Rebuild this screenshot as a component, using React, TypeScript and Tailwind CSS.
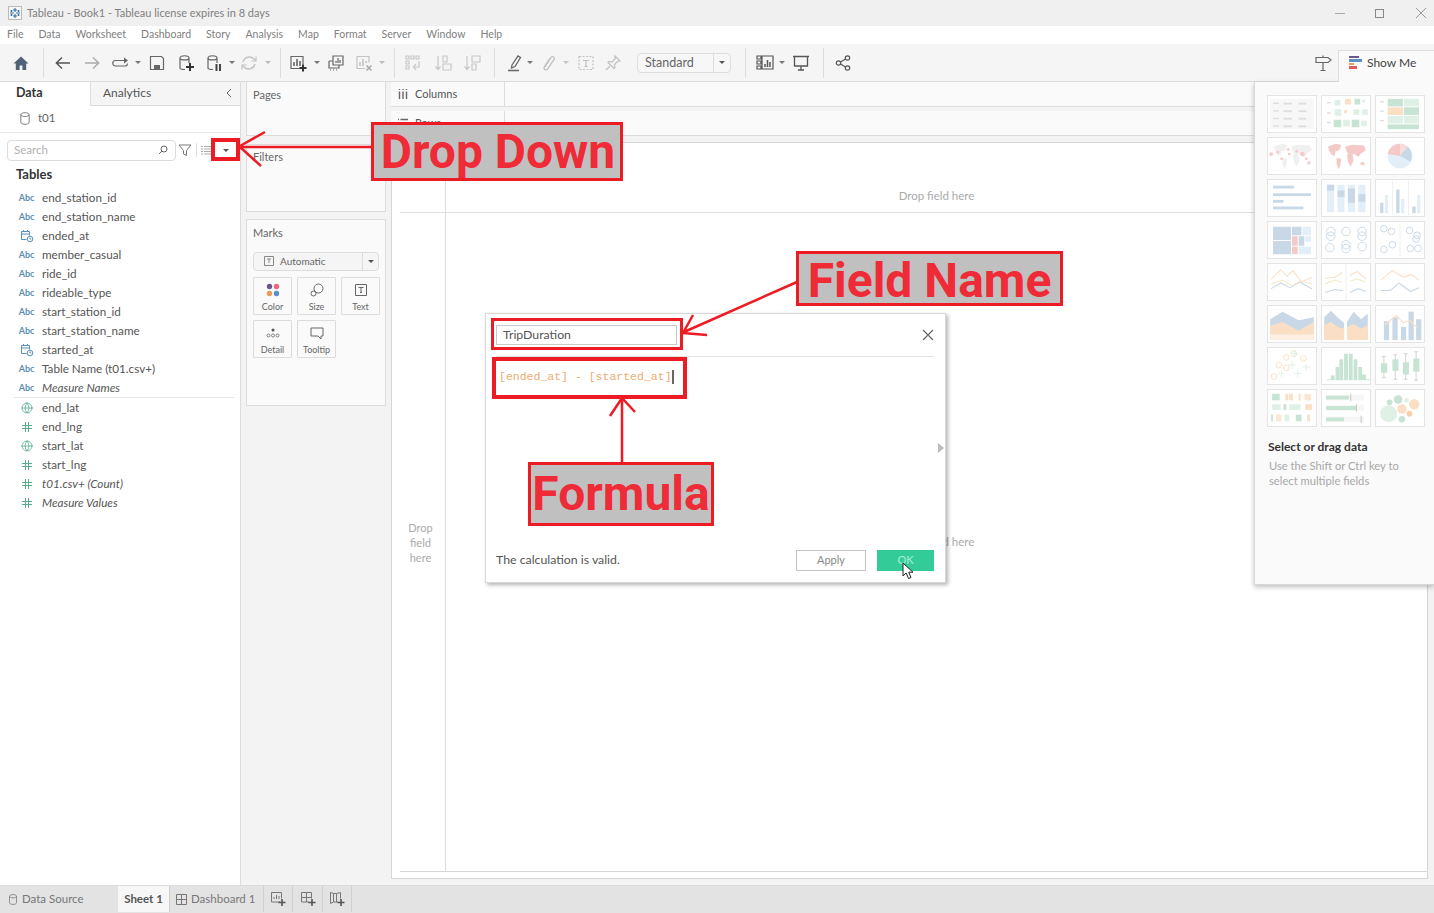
import { Globe } from "lucide-react";
import type { ReactNode } from "react";

const menus = ["File", "Data", "Worksheet", "Dashboard", "Story", "Analysis", "Map", "Format", "Server", "Window", "Help"];

const dims = [
  ["abc", "end_station_id"],
  ["abc", "end_station_name"],
  ["date", "ended_at"],
  ["abc", "member_casual"],
  ["abc", "ride_id"],
  ["abc", "rideable_type"],
  ["abc", "start_station_id"],
  ["abc", "start_station_name"],
  ["date", "started_at"],
  ["abc", "Table Name (t01.csv+)"],
  ["abc", "Measure Names", "i"],
];

const measures = [
  ["globe", "end_lat"],
  ["num", "end_lng"],
  ["globe", "start_lat"],
  ["num", "start_lng"],
  ["num", "t01.csv+ (Count)", "i"],
  ["num", "Measure Values", "i"],
];

function Ic({ children, className = "" }: { children: ReactNode; className?: string }) {
  return (
    <svg viewBox="0 0 20 20" fill="none" stroke="#666" strokeWidth="1.2" className={`h-5 w-5 shrink-0 ${className}`}>
      {children}
    </svg>
  );
}

function Caret({ className = "", color = "border-t-[#777]" }: { className?: string; color?: string }) {
  return <span className={`h-0 w-[6px] shrink-0 border-x-[3px] border-t-[3px] border-x-transparent ${color} ${className}`} />;
}

function Sep({ className = "" }: { className?: string }) {
  return <span className={`h-[30px] w-px shrink-0 bg-[#dcdcdc] ${className}`} />;
}

function Toolbar() {
  return (
    <div className="flex h-[38px] items-center border-b border-[#dcdcdc] bg-[#f5f5f5]">
      <Ic className="ml-[11px]">
        <path d="M10 3.5 2.5 10.5h2.3V17h3.8v-4.5h2.8V17h3.800v-6.500h2.300z" fill="#4f6378" stroke="none" />
      </Ic>
      <Sep className="ml-[12px]" />
      <Ic className="ml-[9px]">
        <path d="M17 10H3M9 4.5 3.3 10 9 15.500" stroke="#555" strokeWidth="1.4" />
      </Ic>
      <Ic className="ml-[9px]">
        <path d="M3 10h14M11 4.500l5.700 5.500-5.700 5.500" stroke="#aaa" strokeWidth="1.4" />
      </Ic>
      <Ic className="ml-[8px]">
        <path d="M15 7.500H5.500a2.500 2.500 0 0 0 0 5.500h10a2.500 2.500 0 0 0 2-2.500" stroke="#666" />
        <path d="M14 4.500l4 3-4 3z" fill="#666" stroke="none" />
      </Ic>
      <Caret className="ml-[5px]" />
      <Ic className="ml-[6px]">
        <path d="M3.500 3.500h11l2 2v11h-13z" stroke="#666" />
        <path d="M7 12h6v4.500H7z" fill="#666" stroke="none" />
      </Ic>
      <Ic className="ml-[9px]">
        <path d="M4 5c0-3 9-3 9 0v5M4 5c0 2.600 9 2.600 9 0M4 5v10c0 1 2 1.500 5 1.500" />
        <path d="M14 10v8M10 14h8" stroke="#333" strokeWidth="2" />
      </Ic>
      <Ic className="ml-[8px]">
        <path d="M4 5c0-3 9-3 9 0v5M4 5c0 2.600 9 2.600 9 0M4 5v10c0 1 2 1.500 5 1.500" />
        <path d="M12.500 11v7M16 11v7" stroke="#444" strokeWidth="2" />
      </Ic>
      <Caret className="ml-[5px]" />
      <Ic className="ml-[4px]">
        <path d="M4 9a6.500 6.500 0 0 1 11-3l1.500 1.500M16 11a6.500 6.500 0 0 1-11 3l-1.500-1.500" stroke="#c4c4c4" strokeWidth="1.4" />
        <path d="M17 3.500V8h-4.500M3 16.500V12h4.500" stroke="#c4c4c4" />
      </Ic>
      <Caret className="ml-[6px]" color="border-t-[#bbb]" />
      <Sep className="ml-[9px]" />
      <Ic className="ml-[7px]">
        <path d="M13 15.500H3v-12h12v8" />
        <path d="M6 13V9M9 13V6M12 13V8" strokeWidth="1.600" />
        <path d="M15 11.500v7M11.500 15h7" stroke="#333" strokeWidth="2" />
      </Ic>
      <Caret className="ml-[6px]" />
      <Ic className="ml-[6px]">
        <path d="M7 3h10v9H7zM3 8h4M3 8v7h10v-3" />
        <path d="M10 10V8M12 10V5M14 10V7M4 17h1M7 17h1M10 17h1" />
      </Ic>
      <Ic className="ml-[8px]">
        <path d="M11 15.500H3v-12h12v6" stroke="#c4c4c4" />
        <path d="M6 13V9M9 13V6M12 10V8" stroke="#c4c4c4" strokeWidth="1.600" />
        <path d="m12.500 12.500 5 5M17.500 12.500l-5 5" stroke="#a8a8a8" strokeWidth="1.500" />
      </Ic>
      <Caret className="ml-[5px]" color="border-t-[#bbb]" />
      <Sep className="ml-[9px]" />
      <Ic className="ml-[8px]">
        <path d="M3 3h3v3H3zM8 3h3v3H8zM13 3h3v3h-3zM3 8h3v3H3zM3 13h3v3H3zM16 8v6h-5M13 11l-2.500 3 2.500 3" stroke="#c8c8c8" />
      </Ic>
      <Ic className="ml-[10px]">
        <path d="M5 3v13M2.500 13.500 5 16.500l2.500-3M10 3h4v6h-4zM10 11h8v6h-8z" stroke="#c8c8c8" />
      </Ic>
      <Ic className="ml-[9px]">
        <path d="M5 3v13M2.500 13.500 5 16.500l2.500-3M10 3h8v6h-8zM10 11h4v6h-4z" stroke="#c8c8c8" />
      </Ic>
      <Sep className="ml-[12px]" />
      <Ic className="ml-[9px]">
        <path d="m8 12 6-9 2.500 1.500-5.500 9-3.500 1.500zM4 17.500h11" stroke="#666" strokeWidth="1.300" />
      </Ic>
      <Caret className="ml-[3px]" />
      <Ic className="ml-[5px]">
        <path d="M7 14 13 4.500c1.500-2 4.500 0 3 2L9.500 16c-1.500 2-4.500 0-3-2.500L12 5" stroke="#c0c0c0" strokeWidth="1.300" />
      </Ic>
      <Caret className="ml-[5px]" color="border-t-[#c4c4c4]" />
      <Ic className="ml-[7px]">
        <path d="M3 3.500h14v13H3z" stroke="#c0c0c0" strokeDasharray="2 1.500" />
        <path d="M7 7.500h6M10 7.500v6M8.500 13.500h3" stroke="#c0c0c0" />
      </Ic>
      <Ic className="ml-[7px]">
        <path d="m12 3 5 5-2.500.5-3 3 .5 3-1 1-6-6 1-1 3 .5 3-3zM7 13l-4 4" stroke="#c0c0c0" />
      </Ic>
      <div className="ml-[14px] flex h-[20px] w-[94px] shrink-0 items-center rounded-sm border border-[#dcdcdc] bg-[#f7f7f7] text-[12.5px] text-[#666]">
        <span className="flex-1 pl-[7px] pt-px">Standard</span>
        <span className="flex h-full w-[17px] items-center justify-center border-l border-[#dcdcdc]">
          <Caret color="border-t-[#555]" />
        </span>
      </div>
      <Sep className="ml-[14px]" />
      <Ic className="ml-[9px]">
        <path d="M2 3h4v3H2zM2 8h4v3H2zM2 13h4v3H2zM7 3h11v13H7z" stroke="#555" />
        <path d="M10 14v-3M12.500 14V7M15 14V9" stroke="#555" strokeWidth="1.500" />
      </Ic>
      <Caret className="ml-[4px]" />
      <Ic className="ml-[6px]">
        <path d="M2 3.500h16M3.500 3.500v9.500h13V3.500M10 13v4M7 17h6" stroke="#555" strokeWidth="1.300" />
      </Ic>
      <Sep className="ml-[12px]" />
      <Ic className="ml-[9px]">
        <circle cx="5.500" cy="10" r="2.200" stroke="#555" />
        <circle cx="14.500" cy="5" r="2.200" stroke="#555" />
        <circle cx="14.500" cy="15" r="2.200" stroke="#555" />
        <path d="m7.500 8.900 5-2.800M7.500 11.100l5 2.800" stroke="#555" />
      </Ic>
      <div className="flex-1" />
      <Ic className="mr-[5px]">
        <path d="M3 4.500h12l3 2.500-3 2.500H3zM10 4.500V2.500M10 9.500v8M7.500 17.500h5" stroke="#666" />
      </Ic>
      <div className="z-10 -mb-px flex h-[32px] w-[96px] items-center self-end border-l border-t border-[#dcdcdc] bg-[#fafafa] pb-[8px]">
        <div className="ml-[10px] flex w-[13px] flex-col gap-px">
          <span className="h-[2px] w-[10px] bg-[#6a5a8c]" />
          <span className="h-[3px] w-[13px] bg-[#5d8fc4]" />
          <span className="h-[2px] w-[5px] bg-[#e8a05a]" />
          <span className="h-[3px] w-[8px] bg-[#e05c5c]" />
        </div>
        <span className="ml-[5px] text-[12px] text-[#444]">Show Me</span>
      </div>
    </div>
  );
}

function FieldIcon({ kind }: { kind: string }) {
  if (kind === "abc") {
    return <span className="w-[17px] text-center text-[9px] font-bold text-[#5a90b3]">Abc</span>;
  }
  if (kind === "date") {
    return (
      <svg viewBox="0 0 14 14" fill="none" stroke="#5a90b3" strokeWidth="1" className="ml-[2px] mr-[1px] h-[14px] w-[14px]">
        <path d="M6.500 10.500H1.500v-8h8v4M1.500 5h8M3.500 1v2M7.500 1v2" />
        <circle cx="10" cy="10" r="2.800" />
        <path d="M10 8.500V10h1.300" />
      </svg>
    );
  }
  if (kind === "globe") {
    return (
      <span className="flex w-[17px] justify-center">
        <Globe size={12} color="#57ad8c" strokeWidth={1.6} />
      </span>
    );
  }
  return (
    <span className="flex w-[17px] justify-center">
      <svg viewBox="0 0 10 10" stroke="#57ad8c" strokeWidth="1" className="h-[10px] w-[10px]">
        <path d="M3.500 0v10M6.500 0v10M0 3.500h10M0 6.500h10" />
      </svg>
    </span>
  );
}

function FieldRow({ row }: { row: string[] }) {
  return (
    <div className="flex h-[19px] items-center pl-[18px]">
      <FieldIcon kind={row[0]} />
      <span className={`ml-[7px] text-[11.7px] text-[#555] ${row[2] ? "italic" : ""}`}>{row[1]}</span>
    </div>
  );
}

function DataPane() {
  return (
    <div className="flex w-[241px] shrink-0 flex-col border-r border-[#dcdcdc] bg-white">
      <div className="flex h-[24px]">
        <div className="flex w-[90px] items-center pb-px pl-4 text-[12.5px] font-bold text-[#333]">Data</div>
        <div className="flex flex-1 items-center justify-between border-b border-l border-[#dcdcdc] bg-[#f5f5f5] pb-px pl-3 pr-[7px] text-[12px] text-[#555]">
          <span>Analytics</span>
          <svg viewBox="0 0 8 10" fill="none" stroke="#666" className="h-[10px] w-2">
            <path d="M6 1 2 5l4 4" />
          </svg>
        </div>
      </div>
      <div className="flex h-[27px] items-center border-b border-[#e6e6e6] pb-[2px] pl-5">
        <svg viewBox="0 0 10 14" fill="none" stroke="#777" className="h-[13px] w-[10px]">
          <path d="M.5 3c0-3 9-3 9 0v8c0 3-9 3-9 0zM.5 3c0 2.500 9 2.500 9 0" />
        </svg>
        <span className="ml-[8px] text-[11.5px] text-[#666]">t01</span>
      </div>
      <div className="flex h-[32px] items-center pl-[7px] pt-[2px]">
        <div className="flex h-[21px] w-[169px] items-center justify-between rounded-sm border border-[#dcdcdc] pl-[6px] pr-[7px] text-[11.5px] text-[#b0b0b0]">
          <span>Search</span>
          <svg viewBox="0 0 10 10" fill="none" stroke="#666" className="h-[10px] w-[10px]">
            <circle cx="6" cy="4" r="3" />
            <path d="M4 6 1 9" />
          </svg>
        </div>
        <svg viewBox="0 0 14 14" fill="none" stroke="#777" className="ml-[2px] h-[14px] w-[14px]">
          <path d="M1 2h12L8.500 7.500V12.500L5.500 11V7.500z" />
        </svg>
        <span className="ml-[4px] h-[14px] w-px bg-[#e0e0e0]" />
        <svg viewBox="0 0 10 10" stroke="#aaa" className="ml-[4px] h-[10px] w-[10px]">
          <path d="M0 1.500h2M3 1.500h7M0 4h2M3 4h7M0 6.500h2M3 6.500h7M0 9h2M3 9h7" />
        </svg>
        <Caret className="ml-[12px]" color="border-t-[#555]" />
      </div>
      <div className="flex h-[20px] items-center pl-4 text-[13px] font-bold text-[#333]">Tables</div>
      <div className="mt-[3px]">
        {dims.map((row) => (
          <FieldRow key={row[1]} row={row} />
        ))}
      </div>
      <div className="ml-[13px] mr-[5px] h-px bg-[#e6e6e6]" />
      <div>
        {measures.map((row) => (
          <FieldRow key={row[1]} row={row} />
        ))}
      </div>
    </div>
  );
}

function MarkBtn({ label, children }: { label: string; children: ReactNode }) {
  return (
    <div className="flex h-[38px] w-[39px] flex-col items-center rounded-[1px] border border-[#dcdcdc] bg-[#fafafa] pt-[5px]">
      <div className="flex h-[16px] items-center">{children}</div>
      <span className="mt-[2px] text-[9px] text-[#666]">{label}</span>
    </div>
  );
}

function CardsPane() {
  return (
    <div className="flex w-[150px] shrink-0 flex-col bg-[#f3f3f3] pl-[5px] pr-[5px]">
      <div className="h-[54px] border border-t-0 border-[#dcdcdc] bg-[#fafafa] pl-[6px] pt-[5px] text-[11px] text-[#666]">Pages</div>
      <div className="mt-[8px] h-[68px] border border-[#dcdcdc] bg-[#fafafa] pl-[6px] pt-[4px] text-[11px] text-[#666]">Filters</div>
      <div className="mt-[7px] h-[187px] border border-[#dcdcdc] bg-[#fafafa] pl-[6px] pt-[5px]">
        <div className="text-[11px] text-[#666]">Marks</div>
        <div className="mt-[10px] flex h-[19px] w-[126px] items-center rounded-sm border border-[#dcdcdc] bg-[#f5f5f5]">
          <svg viewBox="0 0 10 10" fill="none" stroke="#888" className="ml-[10px] h-[10px] w-[10px]">
            <path d="M.5.500h9v9h-9zM3 3h4M5 3v4" />
          </svg>
          <span className="ml-[6px] flex-1 text-[10px] text-[#666]">Automatic</span>
          <span className="flex h-full w-[16px] items-center justify-center border-l border-[#dcdcdc]">
            <Caret color="border-t-[#555]" />
          </span>
        </div>
        <div className="mt-[6px] flex w-[128px] flex-wrap gap-x-[5px] gap-y-[5px]">
          <MarkBtn label="Color">
            <svg viewBox="0 0 14 14" className="h-[14px] w-[14px]">
              <circle cx="3.500" cy="3.500" r="2.700" fill="#6a5a8c" />
              <circle cx="10.500" cy="3.500" r="2.700" fill="#e86a7a" />
              <circle cx="3.500" cy="10.500" r="2.700" fill="#eb9a5a" />
              <circle cx="10.500" cy="10.500" r="2.700" fill="#5d8fc4" />
            </svg>
          </MarkBtn>
          <MarkBtn label="Size">
            <svg viewBox="0 0 14 14" fill="none" stroke="#666" className="h-[14px] w-[14px]">
              <circle cx="8.500" cy="5.500" r="4.500" />
              <circle cx="3.500" cy="10.500" r="2.500" />
            </svg>
          </MarkBtn>
          <MarkBtn label="Text">
            <svg viewBox="0 0 12 12" fill="none" stroke="#666" className="h-[12px] w-[12px]">
              <path d="M.5.500h11v11H.5zM3.500 3.500h5M6 3.500v5M5 8.500h2" />
            </svg>
          </MarkBtn>
          <MarkBtn label="Detail">
            <svg viewBox="0 0 14 10" fill="none" stroke="#666" strokeWidth=".8" className="h-[10px] w-[14px]">
              <circle cx="7" cy="2" r="1.500" fill="#555" stroke="none" />
              <circle cx="2.500" cy="7.500" r="1.500" />
              <circle cx="7" cy="7.500" r="1.500" />
              <circle cx="11.500" cy="7.500" r="1.500" />
            </svg>
          </MarkBtn>
          <MarkBtn label="Tooltip">
            <svg viewBox="0 0 14 14" fill="none" stroke="#666" className="h-[14px] w-[14px]">
              <path d="M1 2h12v8h-2v3l-3-3H1z" />
            </svg>
          </MarkBtn>
        </div>
      </div>
    </div>
  );
}

function Shelf({ label, icon }: { label: string; icon: ReactNode }) {
  return (
    <div className="flex h-[25px] border-b border-[#dcdcdc] bg-[#fafafa]">
      <div className="flex w-[114px] items-center gap-[7px] border-r border-[#dcdcdc] pl-[7px] text-[11px] text-[#555]">
        {icon}
        <span>{label}</span>
      </div>
    </div>
  );
}

function ViewPane() {
  return (
    <div className="flex min-w-0 flex-1 flex-col bg-[#f3f3f3]">
      <Shelf
        label="Columns"
        icon={
          <svg viewBox="0 0 10 10" stroke="#666" strokeWidth="1.400" className="h-[10px] w-[10px]">
            <path d="M1.500 0v1M1.500 2.500V10M5 0v1M5 2.500V10M8.500 0v1M8.500 2.500V10" />
          </svg>
        }
      />
      <div className="mt-[4px]">
        <Shelf
          label="Rows"
          icon={
            <svg viewBox="0 0 10 10" stroke="#666" strokeWidth="1.400" className="h-[10px] w-[10px]">
              <path d="M0 1.500h1M2.500 1.500H10M0 5h1M2.500 5H10M0 8.500h1M2.500 8.500H10" />
            </svg>
          }
        />
      </div>
      <div className="mb-[6px] mr-[6px] mt-[6px] flex flex-1 flex-col border border-[#d6d6d6] bg-white pb-[6px] pl-[8px]">
        <div className="grid flex-1 grid-cols-[46px_1fr] grid-rows-[70px_1fr] border-b border-[#d6d6d6] text-[11.5px] text-[#aaa]">
          <div className="border-b border-r border-[#dedede]" />
          <div className="flex items-end justify-center border-b border-[#dedede] pb-[8px]">Drop field here</div>
          <div className="flex items-center justify-center border-r border-[#dedede] pr-[4px] text-center text-[11px] leading-[15px]">
            Drop
            <br />
            field
            <br />
            here
          </div>
          <div className="flex items-center justify-center">Drop field here</div>
        </div>
      </div>
    </div>
  );
}

function Thumb({ children }: { children: ReactNode }) {
  return (
    <svg viewBox="0 0 50 38" className="h-[38px] w-[50px] border border-[#e4e4e4] bg-white">
      {children}
    </svg>
  );
}

const blue = "#c9d8e6";
const lblue = "#e2eef8";
const orange = "#fbdfc4";
const green = "#c6e3d3";
const lgreen = "#dff1e7";
const red = "#f6c9c9";
const worldPath = "M6 9l8-3 6 1-2 6-4 1-1 5-3-1-3-5zM15 21l5 1-1 7-2 4-2-6zM24 9l8-2 12 1 2 5-5 3-3 4-4-3-5 1-3-3zM26 17l6 1 1 6-3 6-3-5zM41 25l4 1-1 3-4-1z";

function LineSet({ d1, d2, d3 }: { d1: string; d2: string; d3?: string }) {
  return (
    <g fill="none" strokeWidth="1.200">
      <path d={d1} stroke={orange} />
      <path d={d2} stroke={blue} />
      {d3 && <path d={d3} stroke="#f5eccb" />}
    </g>
  );
}

const thumbs: ReactNode[] = [
  <g key="t1">
    <rect x="2" y="3" width="46" height="32" fill="#f7f7f7" />
    {[7, 15, 23, 31].map((y) => (
      <g key={y} fill="#dedede">
        <rect x="5" y={y} width="6" height="1.500" />
        <rect x="16" y={y} width="9" height="2" />
        <rect x="32" y={y} width="8" height="2" />
      </g>
    ))}
  </g>,
  <g key="t2">
    {[[13, 4, 6], [24, 3, 6], [34, 3, 6], [42, 4, 3]].map(([x, y, s]) => (
      <rect key={x} x={x} y={y} width={s} height={s} fill={x === 24 ? orange : x === 34 ? green : lgreen} />
    ))}
    {[[13, 14, 7], [23, 15, 3], [33, 14, 6], [42, 14, 6]].map(([x, y, s]) => (
      <rect key={x} x={x} y={y} width={s} height={s} fill={x === 23 ? orange : lgreen} />
    ))}
    {[[12, 25, 8], [22, 25, 7], [31, 25, 8], [41, 26, 6]].map(([x, y, s]) => (
      <rect key={x} x={x} y={y} width={s} height={s} fill={x === 12 || x === 31 ? green : lgreen} />
    ))}
    <path d="M5 7h4M5 18h4M5 28h4" stroke="#ddd" strokeWidth="1.500" />
  </g>,
  <g key="t3">
    <rect x="12" y="3" width="16" height="8" fill={green} />
    <rect x="29" y="3" width="16" height="8" fill={lgreen} />
    <rect x="12" y="12" width="16" height="8" fill={orange} />
    <rect x="29" y="12" width="16" height="8" fill={green} />
    <rect x="12" y="21" width="16" height="8" fill={lgreen} />
    <rect x="29" y="21" width="16" height="8" fill={lgreen} />
    <rect x="12" y="30" width="33" height="5" fill={green} />
    <path d="M4 6h4M4 16h4M4 26h4" stroke="#ddd" strokeWidth="1.500" />
  </g>,
  <g key="t4" fill="#f0f0f0">
    <path d={worldPath} />
    <g fill={red}>
      {[[3, 17, 2], [10, 15, 1.500], [21, 12, 1.500], [22, 17, 1.500], [36, 17, 2.500], [40, 22, 1.500], [43, 26, 1.500], [14, 22, 1.500], [30, 14, 1.500]].map(([x, y, r]) => (
        <circle key={x} cx={x} cy={y} r={r} />
      ))}
    </g>
  </g>,
  <path key="t5" d={worldPath} fill={red} />,
  <g key="t6">
    <circle cx="25" cy="19" r="13" fill={lblue} />
    <path d="M25 19V6a13 13 0 0 1 11 19z" fill={blue} />
    <path d="M25 19V6a13 13 0 0 0-13 11z" fill={red} />
    <path d="M25 19V6a13 13 0 0 1 8 3z" fill="#f9dddd" />
  </g>,
  <g key="t7" fill={blue}>
    <rect x="5" y="6" width="22" height="3" />
    <rect x="5" y="14" width="40" height="3" />
    <rect x="5" y="21" width="11" height="3" />
    <rect x="5" y="28" width="32" height="3" />
  </g>,
  <g key="t8">
    {[5, 16, 27, 38].map((x, i) => (
      <g key={x}>
        <rect x={x} y="5" width="7.500" height="29" fill={lblue} />
        <rect x={x} y={[5, 11, 9, 15][i]} width="7.500" height={[6, 7, 15, 8][i]} fill={blue} />
      </g>
    ))}
  </g>,
  <g key="t9">
    <path d="M17 1v36M34 1v36" stroke="#eee" />
    <rect x="4" y="24" width="3.500" height="11" fill={blue} />
    <rect x="9" y="16" width="3.500" height="19" fill={lblue} />
    <rect x="21" y="10" width="3.500" height="25" fill={blue} />
    <rect x="26" y="20" width="3.500" height="15" fill={lblue} />
    <rect x="38" y="28" width="3.500" height="7" fill={blue} />
    <rect x="43" y="16" width="3.500" height="19" fill={lblue} />
  </g>,
  <g key="t10">
    <rect x="5" y="5" width="19" height="14" fill={blue} />
    <rect x="5" y="20" width="19" height="14" fill={blue} />
    <rect x="25" y="5" width="10" height="9" fill={blue} />
    <rect x="36" y="5" width="9" height="9" fill={lblue} />
    <rect x="25" y="15" width="6" height="10" fill={red} />
    <rect x="32" y="15" width="6" height="10" fill={blue} />
    <rect x="39" y="15" width="6" height="6" fill={lblue} />
    <rect x="25" y="26" width="6" height="8" fill={red} />
    <rect x="32" y="26" width="13" height="8" fill={lblue} />
  </g>,
  <g key="t11" fill="none" stroke={blue}>
    {[[9, 10], [9, 15], [8, 27], [25, 10], [25, 24], [25, 28], [42, 10], [42, 15], [42, 26]].map(([x, y]) => (
      <circle key={`${x}-${y}`} cx={x} cy={y} r="4.500" />
    ))}
  </g>,
  <g key="t12" fill="none" stroke={blue}>
    <path d="M25 1v36" stroke="#eee" />
    {[[8, 7], [16, 10], [8, 29], [17, 24], [35, 9], [43, 14], [42, 18], [36, 28], [44, 28]].map(([x, y]) => (
      <circle key={`${x}-${y}`} cx={x} cy={y} r="3.500" />
    ))}
  </g>,
  <g key="t13">
    <LineSet d1="M3 16l10-10 7 7 6-6 9 12 11-5" d2="M3 26l10-6 10 5 10-6 13 7" d3="M3 21l12-4 10 6 8-5 13 3" />
  </g>,
  <g key="t14">
    <path d="M25 0v38" stroke="#eee" />
    <LineSet d1="M3 15l10-1 8-5M29 12l8-4 9 8" d2="M3 30l10-3 9 1M29 30l9-4 8 3" d3="M3 21l10-4 8 2M29 18l8-2 9 3" />
  </g>,
  <g key="t15">
    <LineSet d1="M5 17l12-10 12 7 8-3 8 6" d2="M5 28l10 0 9-8 12 9 9-4" />
  </g>,
  <g key="t16">
    <path d="M2 14l13-8 17 9 16-3v24H2z" fill={blue} />
    <path d="M2 21l13-4 17 9 16-9v19H2z" fill={orange} />
    <path d="M2 30h46v6H2z" fill="#fdf0e2" />
  </g>,
  <g key="t17">
    <path d="M2 12l7-7 7 7 7 6v18H2zM26 17l7-11 8 8 7-6v28H26z" fill={blue} />
    <path d="M2 20l7-3 7 5 7 2v12H2zM26 22l7-3 8 5 7-4v16H26z" fill={orange} />
  </g>,
  <g key="t18">
    {[[8, 16], [17, 12], [26, 22], [34, 6], [42, 14]].map(([x, y]) => (
      <rect key={x} x={x} y={y} width="5.500" height={36 - y} fill={blue} />
    ))}
    <path d="M9 20l12-10 8 8 6-3 8 8" fill="none" stroke={orange} strokeWidth="1.200" />
  </g>,
  <g key="t19" fill="none" strokeWidth="1">
    {[[6, 30], [11, 18], [19, 21], [19, 10], [37, 11], [27, 6]].map(([x, y]) => (
      <circle key={`${x}-${y}`} cx={x} cy={y} r="3" stroke={orange} />
    ))}
    <path d="M28 2v8M24 6h8M25 14v8M21 18h8M14 24v7M10 27h7M40 17v7M36 20h8M31 24v7M27 27h8" stroke={lgreen} />
  </g>,
  <g key="t20" fill={green}>
    {[[5, 33], [9, 29], [14, 20], [18, 12], [23, 6], [28, 6], [33, 12], [38, 20], [42, 28], [46, 33]].map(([x, y]) => (
      <rect key={x} x={x} y={y} width="4" height={34 - y} />
    ))}
  </g>,
  <g key="t21">
    {[8, 20, 31, 42].map((x, i) => (
      <g key={x}>
        <path d={`M${x} ${[9, 7, 6, 4][i]}v${[22, 26, 27, 30][i]}M${x - 2} ${[9, 7, 6, 4][i]}h4M${x - 2} ${[31, 33, 33, 34][i]}h4`} stroke="#d0d0d0" />
        <rect x={x - 3} y={[16, 12, 15, 11][i]} width="6.500" height={[10, 12, 13, 14][i]} fill={green} />
      </g>
    ))}
  </g>,
  <g key="t22">
    <rect x="4" y="4" width="8" height="7" fill={green} />
    <rect x="18" y="4" width="3" height="7" fill={orange} />
    <rect x="22" y="4" width="4" height="7" fill={orange} />
    <rect x="32" y="4" width="2" height="7" fill={orange} />
    <rect x="38" y="4" width="7" height="7" fill="#fbe8d4" />
    <rect x="4" y="15" width="9" height="6" fill={lgreen} />
    <rect x="16" y="15" width="3" height="6" fill={green} />
    <rect x="22" y="15" width="12" height="6" fill={lgreen} />
    <rect x="39" y="15" width="7" height="6" fill={orange} />
    <rect x="3" y="26" width="2" height="7" fill={green} />
    <rect x="8" y="26" width="6" height="7" fill="#fbe8d4" />
    <rect x="17" y="26" width="5" height="7" fill={lgreen} />
    <rect x="29" y="26" width="6" height="7" fill={green} />
    <rect x="41" y="26" width="3" height="7" fill={orange} />
  </g>,
  <g key="t23">
    <rect x="4" y="5" width="40" height="6" fill="#f6f6f6" />
    <rect x="4" y="16" width="40" height="6" fill="#f6f6f6" />
    <rect x="4" y="28" width="40" height="6" fill="#f6f6f6" />
    <rect x="4" y="6" width="24" height="4" fill={green} />
    <rect x="4" y="17" width="32" height="4" fill={green} />
    <rect x="4" y="29" width="19" height="4" fill={green} />
    <path d="M30 4v8M36 15v8M41 27v8" stroke="#c4c4c4" />
  </g>,
  <g key="t24">
    <circle cx="13" cy="25" r="9" fill={lgreen} />
    <circle cx="23" cy="10" r="4.500" fill={green} />
    <circle cx="14" cy="13" r="3" fill={green} />
    <circle cx="32" cy="11" r="2.500" fill={lgreen} />
    <circle cx="27" cy="20" r="5" fill={orange} />
    <circle cx="40" cy="15" r="5.500" fill={orange} />
    <circle cx="35" cy="25" r="3" fill="#f9cfa8" />
    <circle cx="27" cy="31" r="3.500" fill={green} />
  </g>,
];

function ShowMe() {
  return (
    <div className="absolute left-[1254px] top-[82px] h-[503px] w-[180px] border-b border-l border-[#d8d8d8] bg-[#fafafa] shadow-[0_2px_5px_rgba(0,0,0,0.25)]">
      <div className="ml-[12px] mt-[13px] grid w-[158px] grid-cols-[50px_50px_50px] gap-x-[4px] gap-y-[4px]">
        {thumbs.map((t, i) => (
          <Thumb key={i}>{t}</Thumb>
        ))}
      </div>
      <div className="ml-[13px] mt-[11px] text-[12px] font-bold text-[#333]">Select or drag data</div>
      <div className="ml-[14px] mt-[2px] text-[11.2px] leading-[15px] text-[#a8a8a8]">
        Use the Shift or Ctrl key to
        <br />
        select multiple fields
      </div>
    </div>
  );
}

function CalcDialog() {
  return (
    <div className="absolute left-[485px] top-[313px] flex h-[270px] w-[461px] flex-col border border-[#d8d8d8] bg-white pl-[10px] pr-[11px] shadow-[2px_2px_4px_rgba(0,0,0,0.3)]">
      <div className="mt-[11px] flex items-center justify-between">
        <div className="flex h-[20px] w-[181px] items-center border border-[#c8c8c8] pl-[6px] text-[12.3px] text-[#555]">TripDuration</div>
        <svg viewBox="0 0 12 12" fill="none" stroke="#666" strokeWidth="1.200" className="h-3 w-3">
          <path d="m1 1 10 10M11 1 1 11" />
        </svg>
      </div>
      <div className="mt-[11px] h-px bg-[#e2e2e2]" />
      <div className="mt-[11px] flex items-center pl-[3px] font-['Liberation_Mono',monospace] text-[11.5px] text-[#eeab72]">
        <span>[ended_at] - [started_at]</span>
        <span className="h-[14px] w-[2px] bg-[#666]" />
      </div>
      <div className="relative flex-1">
        <span className="absolute right-[-10px] top-[58px] h-0 w-0 border-y-[5px] border-l-[6px] border-y-transparent border-l-[#bbb]" />
      </div>
      <div className="mb-[11px] flex items-center">
        <span className="flex-1 text-[12.3px] text-[#555]">The calculation is valid.</span>
        <span className="flex h-[21px] w-[70px] items-center justify-center border border-[#c4c4c4] text-[11px] text-[#888]">Apply</span>
        <span className="ml-[11px] flex h-[21px] w-[57px] items-center justify-center bg-[#33cc99] text-[11px] text-[#a9ecd4]">OK</span>
      </div>
      <svg viewBox="0 0 12 18" className="absolute left-[416px] top-[248px] h-[18px] w-[12px]">
        <path d="M1 1v13l3.200-3 2.300 5.500 2.500-1-2.300-5.300H11z" fill="#fff" stroke="#222" strokeWidth="1" />
      </svg>
    </div>
  );
}

function Label({ text, className }: { text: string; className: string }) {
  return (
    <div className={`absolute flex items-center justify-center border-[3px] border-[#ed1c24] bg-[#c0c0c0] font-['Roboto',sans-serif] font-bold text-[#ee2b37] ${className}`}>
      {text}
    </div>
  );
}

function Annotations() {
  return (
    <>
      <svg viewBox="0 0 1434 913" fill="none" stroke="#ed1c24" strokeWidth="2.500" className="pointer-events-none absolute left-0 top-0 h-[913px] w-[1434px]">
        <path d="M372 147H241M265 132l-25 14M261 166l-21-19" />
        <path d="M797 282 684 332M693 315l-10 18M707 335l-24-2" />
        <path d="M622 463V398M610 416l12-18 13 14" />
      </svg>
      <div className="absolute left-[211px] top-[138px] h-[23px] w-[29px] border-[4px] border-[#ed1c24]" />
      <div className="absolute left-[491px] top-[318px] h-[32px] w-[192px] border-[3px] border-[#ed1c24]" />
      <div className="absolute left-[492px] top-[357px] h-[42px] w-[195px] border-[4px] border-[#ed1c24]" />
      <Label text="Drop Down" className="left-[371px] top-[122px] h-[59px] w-[252px] pl-[2px] text-[48px]" />
      <Label text="Field Name" className="left-[796px] top-[251px] h-[55px] w-[267px] pt-[5px] text-[48px]" />
      <Label text="Formula" className="left-[528px] top-[462px] h-[64px] w-[186px] text-[48px]" />
    </>
  );
}

function BottomTabs() {
  return (
    <div className="flex h-[28px] border-t border-[#dcdcdc] bg-[#e3e3e3] pb-px text-[11.5px] text-[#777]">
      <div className="flex w-[118px] items-center gap-[5px] pl-[9px]">
        <svg viewBox="0 0 10 14" fill="none" stroke="#777" className="h-[11px] w-[8px]">
          <path d="M.5 3c0-3 9-3 9 0v8c0 3-9 3-9 0zM.5 3c0 2.500 9 2.500 9 0" />
        </svg>
        <span>Data Source</span>
      </div>
      <div className="flex w-[52px] items-center justify-center border-r border-[#d0d0d0] bg-[#f7f7f7] font-bold text-[#555]">Sheet 1</div>
      <div className="flex w-[94px] items-center gap-[4px] border-r border-[#d0d0d0] pl-[6px]">
        <svg viewBox="0 0 11 11" fill="none" stroke="#777" className="h-[11px] w-[11px]">
          <path d="M.5.500h10v10H.5zM.5 5.500h10M5.500.500v10" />
        </svg>
        <span>Dashboard 1</span>
      </div>
      <div className="flex w-[29px] items-center justify-center border-r border-[#d0d0d0]">
        <svg viewBox="0 0 16 16" fill="none" stroke="#777" className="h-4 w-4">
          <path d="M10 11H1.500V1.500h10v6M4 8V6M6.500 8V4M9 8V5" />
          <path d="M12 8v7M8.500 11.500h7" stroke="#555" strokeWidth="1.600" />
        </svg>
      </div>
      <div className="flex w-[30px] items-center justify-center border-r border-[#d0d0d0]">
        <svg viewBox="0 0 16 16" fill="none" stroke="#777" className="h-4 w-4">
          <path d="M9 11H1.500V1.500h10v6M1.500 6.500h10M6.500 1.500V11" />
          <path d="M12 8v7M8.500 11.500h7" stroke="#555" strokeWidth="1.600" />
        </svg>
      </div>
      <div className="flex w-[29px] items-center justify-center border-r border-[#d0d0d0]">
        <svg viewBox="0 0 16 16" fill="none" stroke="#777" className="h-4 w-4">
          <path d="M9 11H4.500l-3 1.500v-11l3 1h3l4-1v6M4.500 2.500V11M7.500 2.500V11" />
          <path d="M12 8v7M8.500 11.500h7" stroke="#555" strokeWidth="1.600" />
        </svg>
      </div>
    </div>
  );
}

export default function App() {
  return (
    <div className="relative flex h-[913px] w-[1434px] flex-col overflow-hidden bg-white font-['Lato','Open_Sans',sans-serif]">
      <div className="flex h-[26px] items-center bg-[#f0f0f0] pl-[8px] text-[11px] text-[#808080]">
        <svg viewBox="0 0 14 14" className="h-[14px] w-[14px]" stroke="#2f6ea5" strokeWidth="1.100">
          <rect x=".5" y=".5" width="13" height="13" fill="#f8f8f8" stroke="#bbb" />
          <path d="M7 2v4M5 4h4M7 8v4M5 10h4M2 7h4M8 7h4M3.500 4v2M2.500 5h2M10.500 4v2M9.500 5h2M3.500 8v2M2.500 9h2M10.500 8v2M9.500 9h2" />
        </svg>
        <span className="ml-[5px] flex-1">Tableau - Book1 - Tableau license expires in 8 days</span>
        <span className="h-px w-[10px] bg-[#aaa]" />
        <span className="ml-[30px] h-[9px] w-[9px] border border-[#888]" />
        <svg viewBox="0 0 10 10" stroke="#999" className="ml-[32px] mr-[8px] h-[10px] w-[10px]">
          <path d="m0 0 10 10M10 0 0 10" />
        </svg>
      </div>
      <div className="flex h-[18px] items-center gap-[15px] bg-white pl-[7px] text-[10.5px] text-[#808080]">
        {menus.map((m) => (
          <span key={m}>{m}</span>
        ))}
      </div>
      <Toolbar />
      <div className="flex min-h-0 flex-1">
        <DataPane />
        <CardsPane />
        <ViewPane />
      </div>
      <BottomTabs />
      <ShowMe />
      <CalcDialog />
      <Annotations />
    </div>
  );
}
